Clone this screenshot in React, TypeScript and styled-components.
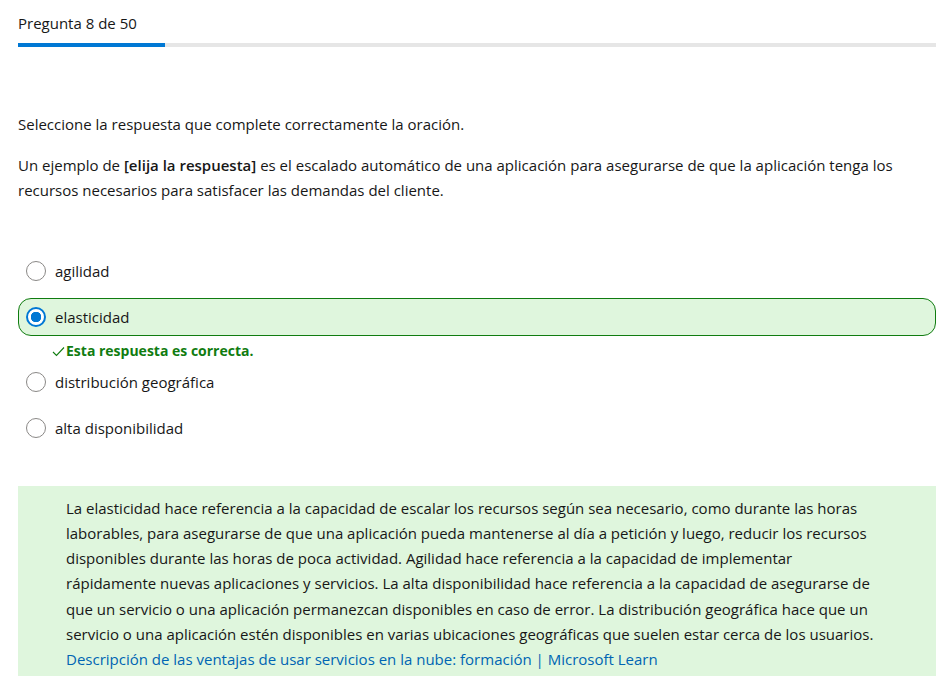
import React from 'react';
import styled, { createGlobalStyle } from 'styled-components';

const GlobalStyle = createGlobalStyle`
  body {
    margin: 0;
    background: #ffffff;
    font-family: 'Segoe UI', 'Open Sans', 'Noto Sans', sans-serif;
    color: #171717;
  }
`;

interface AnswerOption {
  label: string;
  selected?: boolean;
  correct?: boolean;
}

const options: AnswerOption[] = [
  { label: 'agilidad' },
  { label: 'elasticidad', selected: true, correct: true },
  { label: 'distribución geográfica' },
  { label: 'alta disponibilidad' },
];

const current = 8;
const total = 50;

const CheckIcon = () => (
  <svg width="13" height="11" viewBox="0 0 13 11" fill="none">
    <path d="M1 6 L4.5 9.5 L12 1.5" stroke="#107c10" strokeWidth="1.1" />
  </svg>
);

const App = (): JSX.Element => {
  return (
    <Page>
      <GlobalStyle />
      <Counter>
        Pregunta {current} de {total}
      </Counter>
      <Progress>
        <ProgressFill style={{ width: `${(current / total) * 100}%` }} />
      </Progress>

      <Prompt>Seleccione la respuesta que complete correctamente la oración.</Prompt>
      <Question>
        Un ejemplo de <Blank>[elija la respuesta]</Blank> es el escalado automático de una aplicación para asegurarse de
        que la aplicación tenga los recursos necesarios para satisfacer las demandas del cliente.
      </Question>

      <OptionList>
        {options.map((option) => (
          <OptionItem key={option.label}>
            <OptionRow selected={!!option.selected}>
              <Radio checked={!!option.selected} />
              <OptionLabel>{option.label}</OptionLabel>
            </OptionRow>
            {option.selected && option.correct && (
              <Feedback>
                <CheckIcon />
                <span>Esta respuesta es correcta.</span>
              </Feedback>
            )}
          </OptionItem>
        ))}
      </OptionList>

      <Explanation>
        La elasticidad hace referencia a la capacidad de escalar los recursos según sea necesario, como durante las horas
        laborables, para asegurarse de que una aplicación pueda mantenerse al día a petición y luego, reducir los recursos
        disponibles durante las horas de poca actividad. Agilidad hace referencia a la capacidad de implementar rápidamente
        nuevas aplicaciones y servicios. La alta disponibilidad hace referencia a la capacidad de asegurarse de que un
        servicio o una aplicación permanezcan disponibles en caso de error. La distribución geográfica hace que un servicio
        o una aplicación estén disponibles en varias ubicaciones geográficas que suelen estar cerca de los usuarios.
        <br />
        <Link href="#">Descripción de las ventajas de usar servicios en la nube: formación | Microsoft Learn</Link>
      </Explanation>
    </Page>
  );
};

const Page = styled.div`
  padding: 11px 3px 0 18px;
  font-size: 15px;
  line-height: 25px;
`;

const Counter = styled.div`
  line-height: 25px;
`;

const Progress = styled.div`
  margin-top: 7px;
  height: 4px;
  background: #e6e6e6;
`;

const ProgressFill = styled.div`
  height: 100%;
  background: #0078d4;
`;

const Prompt = styled.p`
  margin: 65px 0 0;
`;

const Question = styled.p`
  margin: 16px 0 0;
`;

const Blank = styled.b`
  font-weight: 600;
`;

const OptionList = styled.div`
  display: flex;
  flex-direction: column;
  gap: 8px;
  margin-top: 49px;
`;

const OptionItem = styled.div`
  display: flex;
  flex-direction: column;
`;

const OptionRow = styled.div<{ selected: boolean }>`
  display: flex;
  align-items: center;
  gap: 9px;
  height: 38px;
  box-sizing: border-box;
  padding-left: 7px;
  border: 1px solid ${({ selected }) => (selected ? '#107c10' : 'transparent')};
  border-radius: 13px;
  background: ${({ selected }) => (selected ? '#dff6dd' : 'transparent')};
`;

const Radio = styled.span<{ checked: boolean }>`
  flex-shrink: 0;
  width: 20px;
  height: 20px;
  box-sizing: border-box;
  border-radius: 50%;
  border: ${({ checked }) => (checked ? '2px solid #0078d4' : '1px solid #8a8886')};
  background: ${({ checked }) => (checked ? 'radial-gradient(circle, #0078d4 0 5px, #ffffff 5.5px)' : '#ffffff')};
`;

const OptionLabel = styled.span`
  line-height: 25px;
`;

const Feedback = styled.div`
  display: flex;
  align-items: center;
  gap: 1px;
  margin: 5px 0 -6px 34px;
  line-height: 20px;
  font-size: 14px;
  font-weight: 700;
  color: #107c10;
`;

const Explanation = styled.div`
  margin-top: 39px;
  padding: 9.5px 54px 6px 48px;
  background: #dff6dd;
  line-height: 25.3px;
`;

const Link = styled.a`
  color: #0065b3;
  text-decoration: none;
`;

export default App;
